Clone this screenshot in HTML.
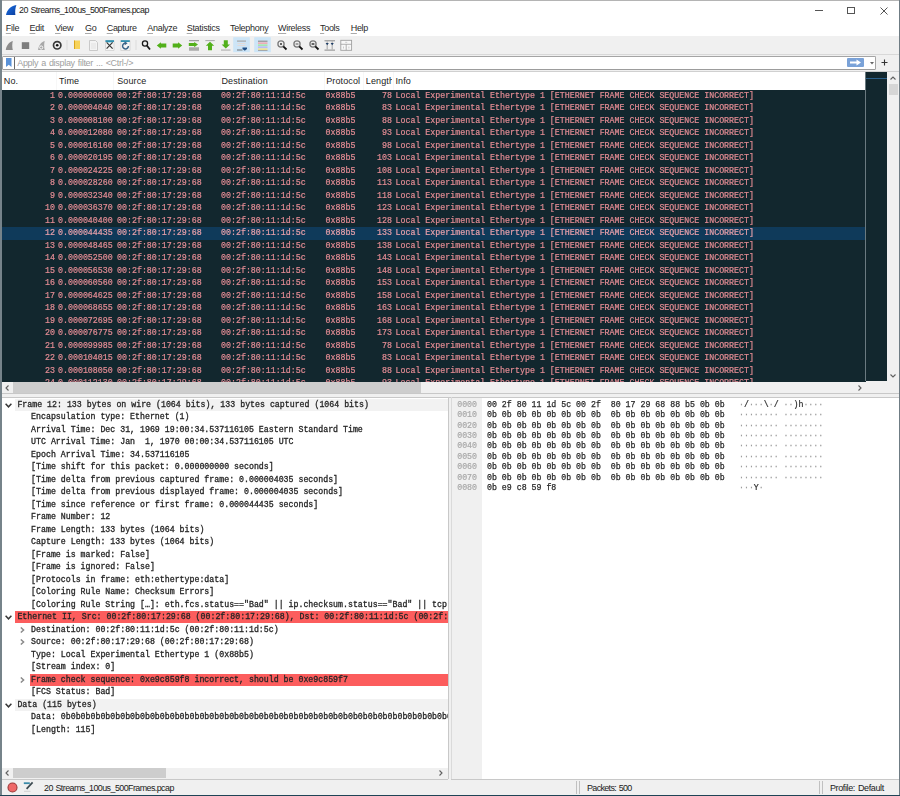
<!DOCTYPE html>
<html><head><meta charset="utf-8">
<style>
*{box-sizing:border-box;margin:0;padding:0}
html,body{width:900px;height:796px;overflow:hidden;background:#f0f0f0}
body{position:relative;font-family:"Liberation Sans",sans-serif;color:#000}
.a{position:absolute}
.ui{font-family:"Liberation Sans",sans-serif;font-size:9px;white-space:pre;letter-spacing:-0.3px;word-spacing:0.8px}
.mono{font-family:"Liberation Mono",monospace}
/* window frame */
#title{left:0;top:0;width:900px;height:19px;background:#fff}
#menubar{left:0;top:19px;width:900px;height:17px;background:#fff}
#toolbar{left:0;top:36px;width:900px;height:18px;background:#f0f0f0}
#fborder-top{left:0;top:0;width:900px;height:1.2px;background:#b4b4b4}
#fborder-l{left:0;top:0;width:1.5px;height:796px;background:#76838a}
#fborder-r{left:898.6px;top:0;width:1.4px;height:796px;background:#6f7c84}
#fborder-b{left:0;top:794.5px;width:900px;height:1.5px;background:#1f4456}
.menu{top:22.8px;color:#2a2a2a}
.menu u{text-decoration:underline;text-decoration-thickness:1px;text-underline-offset:1.5px;text-decoration-color:#aaa}
/* packet list */
#plist{left:2px;top:90px;width:864px;height:291.5px;background:#12272e;overflow:hidden}
.pr{position:absolute;left:-2px;width:866px;height:12.5px}
.pr.sel{background:#0f3a5a}
.c{position:absolute;top:0;font-family:"Liberation Mono",monospace;font-size:8.3px;line-height:12.5px;transform:translateZ(0);color:#e48c94;white-space:pre;-webkit-text-stroke:0.2px #e48c94}
.sel .c{color:#e8a0aa;-webkit-text-stroke:0.2px #e8a0aa}
.no{right:811px;text-align:right}
.tm{left:58px}
.src{left:117px}
.dst{left:221px}
.pro{left:325.5px}
.ln{right:474px;text-align:right}
.inf{left:395.5px}
#phead{left:2px;top:72px;width:864px;height:18px;background:#fff}
.hs{position:absolute;top:0;width:1px;height:18px;background:#f7f7f7}
.ht{position:absolute;top:4px;color:#222;letter-spacing:0.12px}
/* detail */
#dpane{left:2px;top:398px;width:446px;height:381px;background:#fff;overflow:hidden}
.dr{position:absolute;left:-2px;width:448px;height:12.5px}
.dt{position:absolute;top:0;transform:translateZ(0);font-family:"Liberation Mono",monospace;font-size:8.25px;line-height:12.5px;color:#262626;white-space:pre;-webkit-text-stroke:0.3px #262626}
.band{position:absolute;top:0.2px;right:0;height:11.8px}
.band.red{background:#fc5d5d}
.band.grey{background:#f2f2f2}
.chev{position:absolute;top:4px}
/* bytes */
#bpane{left:451px;top:397.5px;width:448px;height:381.5px;background:#fff;overflow:hidden}
.hr{position:absolute;left:-451px;width:900px;height:10.36px}
.off,.hx,.asc{position:absolute;top:0;transform:translateZ(0);font-family:"Liberation Mono",monospace;font-size:8.25px;line-height:10.36px;white-space:pre}
.off{left:457.2px;color:#a8a8a8;-webkit-text-stroke:0.2px #a8a8a8}
.hx{left:487px;color:#2a2a2a;-webkit-text-stroke:0.25px #2a2a2a}
.asc i{font-style:normal;color:#9a9a9a;-webkit-text-stroke:0.2px #9a9a9a}
.asc{left:739px;color:#2a2a2a;-webkit-text-stroke:0.2px #2a2a2a}
</style></head><body>
<div class="a" id="title"></div>
<div class="a" id="menubar"></div>
<div class="a" id="toolbar"></div>

<!-- title -->
<svg class="a" style="left:5px;top:4px" width="13" height="13" viewBox="0 0 13 13"><defs><linearGradient id="fg" x1="0" y1="0" x2="1" y2="1"><stop offset="0" stop-color="#1a72e8"/><stop offset="1" stop-color="#0b3c9c"/></linearGradient></defs><path d="M1 11.1 C1.8 6 5.5 1.8 11.4 0.9 C10.2 4 9.9 8 10.4 11.1 Z" fill="url(#fg)"/></svg>
<div class="a ui" style="left:19px;top:4.5px;font-size:8.9px;letter-spacing:-0.55px;color:#222">20 Streams_100us_500Frames.pcap</div>
<div class="a" style="left:815px;top:10px;width:8px;height:1px;background:#555"></div>
<div class="a" style="left:847px;top:6.5px;width:7.5px;height:7.5px;border:1px solid #555"></div>
<svg class="a" style="left:879.5px;top:6.5px" width="8" height="8" viewBox="0 0 8 8"><path d="M0.5 0.5 L7.5 7.5 M7.5 0.5 L0.5 7.5" stroke="#555" stroke-width="1"/></svg>

<!-- menu -->
<div class="a ui menu" style="left:5.8px"><u>F</u>ile</div>
<div class="a ui menu" style="left:29.6px"><u>E</u>dit</div>
<div class="a ui menu" style="left:55px"><u>V</u>iew</div>
<div class="a ui menu" style="left:85px"><u>G</u>o</div>
<div class="a ui menu" style="left:106.7px"><u>C</u>apture</div>
<div class="a ui menu" style="left:147.3px"><u>A</u>nalyze</div>
<div class="a ui menu" style="left:186.7px"><u>S</u>tatistics</div>
<div class="a ui menu" style="left:230px">Telephon<u>y</u></div>
<div class="a ui menu" style="left:278px"><u>W</u>ireless</div>
<div class="a ui menu" style="left:320px"><u>T</u>ools</div>
<div class="a ui menu" style="left:350.7px"><u>H</u>elp</div>


<!-- toolbar icons -->
<svg class="a" style="left:0;top:36px" width="360" height="18" viewBox="0 36 360 18">
 <!-- start capture fin (grey) -->
 <path d="M5.8 50 C6.5 45.5 9 42 12.8 41 C12.1 43.8 12.1 47 12.8 50 Z" fill="#8c8c8c"/>
 <!-- stop -->
 <rect x="21.8" y="42.2" width="7.4" height="6.8" fill="#7e7e7e"/>
 <!-- restart fin -->
 <path d="M38.1 50 C38.8 45.5 41 42 44.7 41 C44 43.8 44 47 44.7 50 Z" fill="#a8a8a8"/>
 <circle cx="41.2" cy="47.5" r="1.6" fill="none" stroke="#fff" stroke-width="0.9"/>
 <!-- capture options -->
 <circle cx="57.2" cy="45.3" r="3.7" fill="none" stroke="#3a3a3a" stroke-width="1.7"/>
 <circle cx="57.2" cy="45.3" r="1.3" fill="#111"/>
 <rect x="66.5" y="40" width="1" height="10" fill="#dcdcdc"/>
 <!-- open -->
 <rect x="74" y="40.5" width="6" height="8.5" fill="#f7d35a"/>
 <rect x="74" y="40.5" width="1" height="8.5" fill="#d9a520"/>
 <!-- save (disabled doc) -->
 <path d="M89.5 40.5 H95.5 L97.5 42.5 V50.5 H89.5 Z" fill="#f4f4f4" stroke="#c4c4c4" stroke-width="0.9"/>
 <path d="M91 44 H96 M91 46 H96 M91 48 H96" stroke="#dadada" stroke-width="0.7"/>
 <!-- close -->
 <path d="M105.5 40.5 H114 V50.5 H105.5 Z" fill="#f6f6f6" stroke="#d0d0d0" stroke-width="0.8"/>
 <rect x="105.5" y="40.2" width="8.5" height="1.8" fill="#2f8fb0"/>
 <rect x="107" y="42" width="5" height="0.8" fill="#9fe0f0"/>
 <path d="M106.6 42.4 L112.6 48.6 M112.6 42.4 L106.6 48.6" stroke="#383838" stroke-width="1.2"/>
 <!-- reload -->
 <path d="M120.8 40.5 H130 V50.5 H120.8 Z" fill="#f6f6f6" stroke="#d0d0d0" stroke-width="0.8"/>
 <rect x="120.8" y="40.2" width="9" height="1.8" fill="#2f8fb0"/>
 <path d="M126.2 43.2 A2.9 2.9 0 1 0 128.4 46" fill="none" stroke="#3a6488" stroke-width="1.5"/>
 <path d="M124.6 41.6 L127.6 43.3 L124.8 45.2 Z" fill="#3a6488"/>
 <rect x="135.5" y="40" width="1" height="10" fill="#dcdcdc"/>
 <!-- find -->
 <circle cx="145" cy="43.5" r="2.6" fill="none" stroke="#1a1a1a" stroke-width="1.3"/>
 <path d="M146.8 45.5 L150 49.5" stroke="#1a1a1a" stroke-width="1.8"/>
 <!-- back arrow -->
 <path d="M156.8 45.5 L160.9 42.2 V43.6 H166.3 V47.4 H160.9 V48.8 Z" fill="#52b01a"/>
 <!-- forward arrow -->
 <path d="M182.2 45.5 L178.1 42.2 V43.6 H172.7 V47.4 H178.1 V48.8 Z" fill="#52b01a"/>
 <!-- go to packet -->
 <rect x="189" y="40.2" width="10" height="1" fill="#8a8a8a"/>
 <rect x="189" y="47.4" width="10" height="1.4" fill="#9a9a9a"/>
 <rect x="189" y="49.2" width="10" height="1.4" fill="#9a9a9a"/>
 <path d="M198 44.6 L194.2 42 V43.1 H188.8 V46.1 H194.2 V47.2 Z" fill="#52b01a"/>
 <!-- first packet -->
 <rect x="205.3" y="40.2" width="9.5" height="0.9" fill="#a0a0a0"/>
 <path d="M210 41.8 L214.2 45.8 H212 V50.2 H208 V45.8 H205.8 Z" fill="#52b01a"/>
 <!-- last packet -->
 <path d="M225.8 48.6 L230 44.6 H227.8 V40.2 H223.8 V44.6 H221.6 Z" fill="#52b01a"/>
 <rect x="221" y="49.6" width="9.5" height="0.9" fill="#a0a0a0"/>
 <!-- autoscroll (toggled) -->
 <rect x="233.2" y="37.2" width="16.6" height="15" fill="#cde5f7"/>
 <rect x="237" y="40.5" width="9" height="1.2" fill="#a8a8a8"/>
 <rect x="237.5" y="43" width="8" height="0.8" fill="#e8d8d0"/>
 <rect x="237.5" y="45" width="8" height="0.8" fill="#e8d8d0"/>
 <rect x="237" y="49.6" width="5.5" height="0.8" fill="#555"/>
 <path d="M242.5 47.6 H247 V49 L244.8 50.7 L242.5 49 Z" fill="#1f4f86"/>
 <!-- colorize (toggled) -->
 <rect x="254.2" y="37.2" width="16.6" height="15" fill="#cde5f7"/>
 <rect x="258" y="40.6" width="9.5" height="1.3" fill="#9a9a9a"/>
 <rect x="258" y="42.4" width="9.5" height="1.5" fill="#f2a6b0"/>
 <rect x="258" y="44.4" width="9.5" height="1.5" fill="#a6e6a6"/>
 <rect x="258" y="46.4" width="9.5" height="1.5" fill="#b8b8f0"/>
 <rect x="258" y="48.4" width="9.5" height="1.5" fill="#f2e08a"/>
 <rect x="258" y="50" width="9.5" height="0.8" fill="#9a9a9a"/>
 <!-- zoom in/out/normal -->
 <g>
 <circle cx="281" cy="44" r="3.1" fill="#eee" stroke="#7a7a7a" stroke-width="1.3"/>
 <circle cx="281" cy="44" r="1" fill="#333"/>
 <path d="M283.3 46.4 L286.5 49.5" stroke="#111" stroke-width="1.8"/>
 <circle cx="297" cy="44" r="3.1" fill="#eee" stroke="#7a7a7a" stroke-width="1.3"/>
 <rect x="295.6" y="43.5" width="2.8" height="1" fill="#555"/>
 <path d="M299.3 46.4 L302.5 49.5" stroke="#111" stroke-width="1.8"/>
 <circle cx="313" cy="44" r="3.1" fill="#eee" stroke="#7a7a7a" stroke-width="1.3"/>
 <rect x="311.6" y="43.2" width="2.8" height="1.6" fill="#444"/>
 <path d="M315.3 46.4 L318.5 49.5" stroke="#111" stroke-width="1.8"/>
 </g>
 <!-- resize columns -->
 <rect x="324.5" y="40.3" width="10.5" height="1" fill="#8a8a8a"/>
 <rect x="324.5" y="49.6" width="10.5" height="1" fill="#8a8a8a"/>
 <rect x="326.6" y="41.3" width="1.2" height="8.3" fill="#b0b0b0"/>
 <rect x="331.6" y="41.3" width="1.2" height="8.3" fill="#b0b0b0"/>
 <path d="M325.6 43 H328.8 L327.2 45.2 Z" fill="#1e3e66"/>
 <path d="M330.6 43 H333.8 L332.2 45.2 Z" fill="#1e3e66"/>
 <!-- layout -->
 <rect x="340.8" y="40.3" width="10.8" height="10" fill="#f8f8f8" stroke="#a0a0a0" stroke-width="0.9"/>
 <path d="M340.8 44.3 H351.6 M346.2 44.3 V50.3" stroke="#a0a0a0" stroke-width="0.8"/>
 <path d="M345.2 42.3 H347.2 M343.5 46.5 V48.5 M348.9 46.5 V48.5" stroke="#b8b8b8" stroke-width="0.7"/>
</svg>
<div class="a" style="left:0;top:54px;width:900px;height:1px;background:#d8d8d8"></div>

<!-- filter bar -->
<div class="a" style="left:2.3px;top:55.5px;width:874px;height:14.5px;background:#fff;border:1px solid #a4a4a4;border-bottom:1.6px solid #9c9c9c;border-radius:1.5px"></div>
<div class="a" style="left:14px;top:56.5px;width:1px;height:12px;background:#6a6a6a"></div>
<svg class="a" style="left:5.5px;top:57.5px" width="6" height="9" viewBox="0 0 6 9"><path d="M0 0 H5.5 V9 L2.75 6.8 L0 9 Z" fill="#5a92d8"/></svg>
<div class="a ui" style="left:17.2px;top:58px;color:#a0a0a0">Apply a display filter ... &lt;Ctrl-/&gt;</div>
<div class="a" style="left:847px;top:58px;width:16.5px;height:9px;background:#7aa2d8;border-radius:1px"></div>
<svg class="a" style="left:849px;top:59px" width="13" height="7" viewBox="0 0 13 7"><path d="M1 2.5 H7.5 V0.5 L12 3.5 L7.5 6.5 V4.5 H1 Z" fill="#fff"/></svg>
<svg class="a" style="left:869.5px;top:61.5px" width="4" height="3" viewBox="0 0 4 3"><path d="M0 0 H4 L2 2.5 Z" fill="#666"/></svg>
<svg class="a" style="left:881px;top:59px" width="7" height="7" viewBox="0 0 7 7"><path d="M3.5 0.5 V6.5 M0.5 3.5 H6.5" stroke="#333" stroke-width="1.1"/></svg>

<!-- packet list header -->
<div class="a" style="left:0;top:71px;width:900px;height:1px;background:#d0d0d0"></div>
<div class="a" id="phead">
  <div class="hs" style="left:53.5px"></div>
  <div class="hs" style="left:111.3px"></div>
  <div class="hs" style="left:217.5px"></div>
  <div class="hs" style="left:322px"></div>
  <div class="hs" style="left:361.3px"></div>
  <div class="hs" style="left:391px"></div>
  <div class="ht ui" style="left:1.8px">No.</div>
  <div class="ht ui" style="left:57px">Time</div>
  <div class="ht ui" style="left:115.2px">Source</div>
  <div class="ht ui" style="left:219.5px">Destination</div>
  <div class="ht ui" style="left:324.2px">Protocol</div>
  <div class="ht ui" style="left:363.8px;width:26.2px;overflow:hidden">Length</div>
  <div class="ht ui" style="left:393.5px">Info</div>
</div>
<div class="a" id="plist">
<div class="pr" style="top:-0.30px"><span class="c no">1</span><span class="c tm">0.000000000</span><span class="c src">00:2f:80:17:29:68</span><span class="c dst">00:2f:80:11:1d:5c</span><span class="c pro">0x88b5</span><span class="c ln">78</span><span class="c inf">Local Experimental Ethertype 1 [ETHERNET FRAME CHECK SEQUENCE INCORRECT]</span></div>
<div class="pr" style="top:12.20px"><span class="c no">2</span><span class="c tm">0.000004040</span><span class="c src">00:2f:80:17:29:68</span><span class="c dst">00:2f:80:11:1d:5c</span><span class="c pro">0x88b5</span><span class="c ln">83</span><span class="c inf">Local Experimental Ethertype 1 [ETHERNET FRAME CHECK SEQUENCE INCORRECT]</span></div>
<div class="pr" style="top:24.70px"><span class="c no">3</span><span class="c tm">0.000008100</span><span class="c src">00:2f:80:17:29:68</span><span class="c dst">00:2f:80:11:1d:5c</span><span class="c pro">0x88b5</span><span class="c ln">88</span><span class="c inf">Local Experimental Ethertype 1 [ETHERNET FRAME CHECK SEQUENCE INCORRECT]</span></div>
<div class="pr" style="top:37.20px"><span class="c no">4</span><span class="c tm">0.000012080</span><span class="c src">00:2f:80:17:29:68</span><span class="c dst">00:2f:80:11:1d:5c</span><span class="c pro">0x88b5</span><span class="c ln">93</span><span class="c inf">Local Experimental Ethertype 1 [ETHERNET FRAME CHECK SEQUENCE INCORRECT]</span></div>
<div class="pr" style="top:49.70px"><span class="c no">5</span><span class="c tm">0.000016160</span><span class="c src">00:2f:80:17:29:68</span><span class="c dst">00:2f:80:11:1d:5c</span><span class="c pro">0x88b5</span><span class="c ln">98</span><span class="c inf">Local Experimental Ethertype 1 [ETHERNET FRAME CHECK SEQUENCE INCORRECT]</span></div>
<div class="pr" style="top:62.20px"><span class="c no">6</span><span class="c tm">0.000020195</span><span class="c src">00:2f:80:17:29:68</span><span class="c dst">00:2f:80:11:1d:5c</span><span class="c pro">0x88b5</span><span class="c ln">103</span><span class="c inf">Local Experimental Ethertype 1 [ETHERNET FRAME CHECK SEQUENCE INCORRECT]</span></div>
<div class="pr" style="top:74.70px"><span class="c no">7</span><span class="c tm">0.000024225</span><span class="c src">00:2f:80:17:29:68</span><span class="c dst">00:2f:80:11:1d:5c</span><span class="c pro">0x88b5</span><span class="c ln">108</span><span class="c inf">Local Experimental Ethertype 1 [ETHERNET FRAME CHECK SEQUENCE INCORRECT]</span></div>
<div class="pr" style="top:87.20px"><span class="c no">8</span><span class="c tm">0.000028260</span><span class="c src">00:2f:80:17:29:68</span><span class="c dst">00:2f:80:11:1d:5c</span><span class="c pro">0x88b5</span><span class="c ln">113</span><span class="c inf">Local Experimental Ethertype 1 [ETHERNET FRAME CHECK SEQUENCE INCORRECT]</span></div>
<div class="pr" style="top:99.70px"><span class="c no">9</span><span class="c tm">0.000032340</span><span class="c src">00:2f:80:17:29:68</span><span class="c dst">00:2f:80:11:1d:5c</span><span class="c pro">0x88b5</span><span class="c ln">118</span><span class="c inf">Local Experimental Ethertype 1 [ETHERNET FRAME CHECK SEQUENCE INCORRECT]</span></div>
<div class="pr" style="top:112.20px"><span class="c no">10</span><span class="c tm">0.000036370</span><span class="c src">00:2f:80:17:29:68</span><span class="c dst">00:2f:80:11:1d:5c</span><span class="c pro">0x88b5</span><span class="c ln">123</span><span class="c inf">Local Experimental Ethertype 1 [ETHERNET FRAME CHECK SEQUENCE INCORRECT]</span></div>
<div class="pr" style="top:124.70px"><span class="c no">11</span><span class="c tm">0.000040400</span><span class="c src">00:2f:80:17:29:68</span><span class="c dst">00:2f:80:11:1d:5c</span><span class="c pro">0x88b5</span><span class="c ln">128</span><span class="c inf">Local Experimental Ethertype 1 [ETHERNET FRAME CHECK SEQUENCE INCORRECT]</span></div>
<div class="pr sel" style="top:137.20px"><span class="c no">12</span><span class="c tm">0.000044435</span><span class="c src">00:2f:80:17:29:68</span><span class="c dst">00:2f:80:11:1d:5c</span><span class="c pro">0x88b5</span><span class="c ln">133</span><span class="c inf">Local Experimental Ethertype 1 [ETHERNET FRAME CHECK SEQUENCE INCORRECT]</span></div>
<div class="pr" style="top:149.70px"><span class="c no">13</span><span class="c tm">0.000048465</span><span class="c src">00:2f:80:17:29:68</span><span class="c dst">00:2f:80:11:1d:5c</span><span class="c pro">0x88b5</span><span class="c ln">138</span><span class="c inf">Local Experimental Ethertype 1 [ETHERNET FRAME CHECK SEQUENCE INCORRECT]</span></div>
<div class="pr" style="top:162.20px"><span class="c no">14</span><span class="c tm">0.000052500</span><span class="c src">00:2f:80:17:29:68</span><span class="c dst">00:2f:80:11:1d:5c</span><span class="c pro">0x88b5</span><span class="c ln">143</span><span class="c inf">Local Experimental Ethertype 1 [ETHERNET FRAME CHECK SEQUENCE INCORRECT]</span></div>
<div class="pr" style="top:174.70px"><span class="c no">15</span><span class="c tm">0.000056530</span><span class="c src">00:2f:80:17:29:68</span><span class="c dst">00:2f:80:11:1d:5c</span><span class="c pro">0x88b5</span><span class="c ln">148</span><span class="c inf">Local Experimental Ethertype 1 [ETHERNET FRAME CHECK SEQUENCE INCORRECT]</span></div>
<div class="pr" style="top:187.20px"><span class="c no">16</span><span class="c tm">0.000060560</span><span class="c src">00:2f:80:17:29:68</span><span class="c dst">00:2f:80:11:1d:5c</span><span class="c pro">0x88b5</span><span class="c ln">153</span><span class="c inf">Local Experimental Ethertype 1 [ETHERNET FRAME CHECK SEQUENCE INCORRECT]</span></div>
<div class="pr" style="top:199.70px"><span class="c no">17</span><span class="c tm">0.000064625</span><span class="c src">00:2f:80:17:29:68</span><span class="c dst">00:2f:80:11:1d:5c</span><span class="c pro">0x88b5</span><span class="c ln">158</span><span class="c inf">Local Experimental Ethertype 1 [ETHERNET FRAME CHECK SEQUENCE INCORRECT]</span></div>
<div class="pr" style="top:212.20px"><span class="c no">18</span><span class="c tm">0.000068655</span><span class="c src">00:2f:80:17:29:68</span><span class="c dst">00:2f:80:11:1d:5c</span><span class="c pro">0x88b5</span><span class="c ln">163</span><span class="c inf">Local Experimental Ethertype 1 [ETHERNET FRAME CHECK SEQUENCE INCORRECT]</span></div>
<div class="pr" style="top:224.70px"><span class="c no">19</span><span class="c tm">0.000072695</span><span class="c src">00:2f:80:17:29:68</span><span class="c dst">00:2f:80:11:1d:5c</span><span class="c pro">0x88b5</span><span class="c ln">168</span><span class="c inf">Local Experimental Ethertype 1 [ETHERNET FRAME CHECK SEQUENCE INCORRECT]</span></div>
<div class="pr" style="top:237.20px"><span class="c no">20</span><span class="c tm">0.000076775</span><span class="c src">00:2f:80:17:29:68</span><span class="c dst">00:2f:80:11:1d:5c</span><span class="c pro">0x88b5</span><span class="c ln">173</span><span class="c inf">Local Experimental Ethertype 1 [ETHERNET FRAME CHECK SEQUENCE INCORRECT]</span></div>
<div class="pr" style="top:249.70px"><span class="c no">21</span><span class="c tm">0.000099985</span><span class="c src">00:2f:80:17:29:68</span><span class="c dst">00:2f:80:11:1d:5c</span><span class="c pro">0x88b5</span><span class="c ln">78</span><span class="c inf">Local Experimental Ethertype 1 [ETHERNET FRAME CHECK SEQUENCE INCORRECT]</span></div>
<div class="pr" style="top:262.20px"><span class="c no">22</span><span class="c tm">0.000104015</span><span class="c src">00:2f:80:17:29:68</span><span class="c dst">00:2f:80:11:1d:5c</span><span class="c pro">0x88b5</span><span class="c ln">83</span><span class="c inf">Local Experimental Ethertype 1 [ETHERNET FRAME CHECK SEQUENCE INCORRECT]</span></div>
<div class="pr" style="top:274.70px"><span class="c no">23</span><span class="c tm">0.000108050</span><span class="c src">00:2f:80:17:29:68</span><span class="c dst">00:2f:80:11:1d:5c</span><span class="c pro">0x88b5</span><span class="c ln">88</span><span class="c inf">Local Experimental Ethertype 1 [ETHERNET FRAME CHECK SEQUENCE INCORRECT]</span></div>
<div class="pr" style="top:287.20px"><span class="c no">24</span><span class="c tm">0.000112130</span><span class="c src">00:2f:80:17:29:68</span><span class="c dst">00:2f:80:11:1d:5c</span><span class="c pro">0x88b5</span><span class="c ln">93</span><span class="c inf">Local Experimental Ethertype 1 [ETHERNET FRAME CHECK SEQUENCE INCORRECT]</span></div>
</div>
<!-- minimap -->
<div class="a" style="left:865px;top:72px;width:1px;height:309px;background:#6a7a80"></div>
<div class="a" style="left:866px;top:72px;width:21px;height:309px;background:#12272e"></div>
<div class="a" style="left:866px;top:78px;width:21px;height:1px;background:#2a5f8a"></div>
<!-- vertical scrollbar -->
<div class="a" style="left:887px;top:72px;width:11.5px;height:309px;background:#f0f0f0"></div>
<svg class="a" style="left:890px;top:76px" width="6" height="4" viewBox="0 0 6 4"><path d="M0.5 3.5 L3 1 L5.5 3.5" fill="none" stroke="#606060" stroke-width="1.1"/></svg>
<div class="a" style="left:888.5px;top:84.2px;width:9.5px;height:11px;background:#d6d6d6"></div>
<svg class="a" style="left:890px;top:374px" width="6" height="4" viewBox="0 0 6 4"><path d="M0.5 0.5 L3 3 L5.5 0.5" fill="none" stroke="#606060" stroke-width="1.1"/></svg>
<!-- horizontal scrollbar -->
<div class="a" style="left:2px;top:381.5px;width:885px;height:11.5px;background:#f0f0f0"></div>
<div class="a" style="left:13px;top:382px;width:408px;height:10.5px;background:#cdcdcd"></div>
<svg class="a" style="left:5px;top:384.5px" width="4" height="6" viewBox="0 0 4 6"><path d="M3.5 0.5 L1 3 L3.5 5.5" fill="none" stroke="#606060" stroke-width="1.1"/></svg>
<svg class="a" style="left:858px;top:384.5px" width="4" height="6" viewBox="0 0 4 6"><path d="M0.5 0.5 L3 3 L0.5 5.5" fill="none" stroke="#606060" stroke-width="1.1"/></svg>
<div class="a" style="left:0;top:393px;width:900px;height:1px;background:#c8c8c8"></div>
<div class="a" style="left:0;top:397px;width:900px;height:1px;background:#c8c8c8"></div>

<!-- detail pane -->
<div class="a" id="dpane">
<div class="dr" style="top:0.60px"><div class="band grey" style="left:15px"></div><svg class="chev" style="left:5px" width="7" height="5" viewBox="0 0 7 5"><path d="M0.6 0.8 L3.5 3.8 L6.4 0.8" fill="none" stroke="#383838" stroke-width="1.5"/></svg><span class="dt" style="left:17.4px">Frame 12: 133 bytes on wire (1064 bits), 133 bytes captured (1064 bits)</span></div>
<div class="dr" style="top:13.10px"><span class="dt" style="left:31.1px">Encapsulation type: Ethernet (1)</span></div>
<div class="dr" style="top:25.60px"><span class="dt" style="left:31.1px">Arrival Time: Dec 31, 1969 19:00:34.537116105 Eastern Standard Time</span></div>
<div class="dr" style="top:38.10px"><span class="dt" style="left:31.1px">UTC Arrival Time: Jan  1, 1970 00:00:34.537116105 UTC</span></div>
<div class="dr" style="top:50.60px"><span class="dt" style="left:31.1px">Epoch Arrival Time: 34.537116105</span></div>
<div class="dr" style="top:63.10px"><span class="dt" style="left:31.1px">[Time shift for this packet: 0.000000000 seconds]</span></div>
<div class="dr" style="top:75.60px"><span class="dt" style="left:31.1px">[Time delta from previous captured frame: 0.000004035 seconds]</span></div>
<div class="dr" style="top:88.10px"><span class="dt" style="left:31.1px">[Time delta from previous displayed frame: 0.000004035 seconds]</span></div>
<div class="dr" style="top:100.60px"><span class="dt" style="left:31.1px">[Time since reference or first frame: 0.000044435 seconds]</span></div>
<div class="dr" style="top:113.10px"><span class="dt" style="left:31.1px">Frame Number: 12</span></div>
<div class="dr" style="top:125.60px"><span class="dt" style="left:31.1px">Frame Length: 133 bytes (1064 bits)</span></div>
<div class="dr" style="top:138.10px"><span class="dt" style="left:31.1px">Capture Length: 133 bytes (1064 bits)</span></div>
<div class="dr" style="top:150.60px"><span class="dt" style="left:31.1px">[Frame is marked: False]</span></div>
<div class="dr" style="top:163.10px"><span class="dt" style="left:31.1px">[Frame is ignored: False]</span></div>
<div class="dr" style="top:175.60px"><span class="dt" style="left:31.1px">[Protocols in frame: eth:ethertype:data]</span></div>
<div class="dr" style="top:188.10px"><span class="dt" style="left:31.1px">[Coloring Rule Name: Checksum Errors]</span></div>
<div class="dr" style="top:200.60px"><span class="dt" style="left:31.1px">[Coloring Rule String […]: eth.fcs.status==&quot;Bad&quot; || ip.checksum.status==&quot;Bad&quot; || tcp.checksum.status==&quot;Bad&quot; || udp.checksum.status==&quot;Bad&quot;</span></div>
<div class="dr" style="top:213.10px"><div class="band red" style="left:15px"></div><svg class="chev" style="left:5px" width="7" height="5" viewBox="0 0 7 5"><path d="M0.6 0.8 L3.5 3.8 L6.4 0.8" fill="none" stroke="#383838" stroke-width="1.5"/></svg><span class="dt" style="left:17.4px">Ethernet II, Src: 00:2f:80:17:29:68 (00:2f:80:17:29:68), Dst: 00:2f:80:11:1d:5c (00:2f:80:11:1d:5c)</span></div>
<div class="dr" style="top:225.60px"><svg class="chev" style="left:19.8px;top:3.3px" width="5" height="6" viewBox="0 0 5 6"><path d="M0.8 0.5 L3.6 3 L0.8 5.5" fill="none" stroke="#8a8a8a" stroke-width="1.45"/></svg><span class="dt" style="left:31.1px">Destination: 00:2f:80:11:1d:5c (00:2f:80:11:1d:5c)</span></div>
<div class="dr" style="top:238.10px"><svg class="chev" style="left:19.8px;top:3.3px" width="5" height="6" viewBox="0 0 5 6"><path d="M0.8 0.5 L3.6 3 L0.8 5.5" fill="none" stroke="#8a8a8a" stroke-width="1.45"/></svg><span class="dt" style="left:31.1px">Source: 00:2f:80:17:29:68 (00:2f:80:17:29:68)</span></div>
<div class="dr" style="top:250.60px"><span class="dt" style="left:31.1px">Type: Local Experimental Ethertype 1 (0x88b5)</span></div>
<div class="dr" style="top:263.10px"><span class="dt" style="left:31.1px">[Stream index: 0]</span></div>
<div class="dr" style="top:275.60px"><div class="band red" style="left:29.5px"></div><svg class="chev" style="left:19.8px;top:3.3px" width="5" height="6" viewBox="0 0 5 6"><path d="M0.8 0.5 L3.6 3 L0.8 5.5" fill="none" stroke="#8a8a8a" stroke-width="1.45"/></svg><span class="dt" style="left:31.1px">Frame check sequence: 0xe9c859f8 incorrect, should be 0xe9c859f7</span></div>
<div class="dr" style="top:288.10px"><span class="dt" style="left:31.1px">[FCS Status: Bad]</span></div>
<div class="dr" style="top:300.60px"><div class="band grey" style="left:15px"></div><svg class="chev" style="left:5px" width="7" height="5" viewBox="0 0 7 5"><path d="M0.6 0.8 L3.5 3.8 L6.4 0.8" fill="none" stroke="#383838" stroke-width="1.5"/></svg><span class="dt" style="left:17.4px">Data (115 bytes)</span></div>
<div class="dr" style="top:313.10px"><span class="dt" style="left:31.1px">Data: 0b0b0b0b0b0b0b0b0b0b0b0b0b0b0b0b0b0b0b0b0b0b0b0b0b0b0b0b0b0b0b0b0b0b0b0b0b0b0b0b0b0b0b0b0b0b0b0b0b0b0b0b0b0b0b0b0b0b0b0b0b0b0b0b0b0b0b0b0b0b0b0b0b0b0b0b0b0b0b0b0b0b0b0b0b0b0b0b0b0b0b0b0b0b0b0b0b0b0b0b0b0b0b0b0b0b0b0b0b0b0b0b0b0b0b</span></div>
<div class="dr" style="top:325.60px"><span class="dt" style="left:31.1px">[Length: 115]</span></div>
</div>
<div class="a" style="left:447.5px;top:397px;width:1px;height:382px;background:#c8c8c8"></div>
<div class="a" style="left:2px;top:767.5px;width:445.5px;height:11px;background:#f0f0f0"></div>
<div class="a" style="left:13px;top:768px;width:153px;height:10px;background:#cdcdcd"></div>
<svg class="a" style="left:5px;top:770px" width="4" height="6" viewBox="0 0 4 6"><path d="M3.5 0.5 L1 3 L3.5 5.5" fill="none" stroke="#606060" stroke-width="1.1"/></svg>
<svg class="a" style="left:439px;top:770px" width="4" height="6" viewBox="0 0 4 6"><path d="M0.5 0.5 L3 3 L0.5 5.5" fill="none" stroke="#606060" stroke-width="1.1"/></svg>

<!-- bytes pane -->
<div class="a" id="bpane">
  <div class="a" style="left:0;top:0;width:30.5px;height:382px;background:#f0f0f0"></div>
<div class="hr" style="top:2.50px"><span class="off">0000</span><span class="hx">00 2f 80 11 1d 5c 00 2f  80 17 29 68 88 b5 0b 0b</span><span class="asc"><i>·</i>/<i>·</i><i>·</i><i>·</i>\<i>·</i>/ <i>·</i><i>·</i>)h<i>·</i><i>·</i><i>·</i><i>·</i></span></div>
<div class="hr" style="top:12.86px"><span class="off">0010</span><span class="hx">0b 0b 0b 0b 0b 0b 0b 0b  0b 0b 0b 0b 0b 0b 0b 0b</span><span class="asc"><i>·</i><i>·</i><i>·</i><i>·</i><i>·</i><i>·</i><i>·</i><i>·</i> <i>·</i><i>·</i><i>·</i><i>·</i><i>·</i><i>·</i><i>·</i><i>·</i></span></div>
<div class="hr" style="top:23.22px"><span class="off">0020</span><span class="hx">0b 0b 0b 0b 0b 0b 0b 0b  0b 0b 0b 0b 0b 0b 0b 0b</span><span class="asc"><i>·</i><i>·</i><i>·</i><i>·</i><i>·</i><i>·</i><i>·</i><i>·</i> <i>·</i><i>·</i><i>·</i><i>·</i><i>·</i><i>·</i><i>·</i><i>·</i></span></div>
<div class="hr" style="top:33.58px"><span class="off">0030</span><span class="hx">0b 0b 0b 0b 0b 0b 0b 0b  0b 0b 0b 0b 0b 0b 0b 0b</span><span class="asc"><i>·</i><i>·</i><i>·</i><i>·</i><i>·</i><i>·</i><i>·</i><i>·</i> <i>·</i><i>·</i><i>·</i><i>·</i><i>·</i><i>·</i><i>·</i><i>·</i></span></div>
<div class="hr" style="top:43.94px"><span class="off">0040</span><span class="hx">0b 0b 0b 0b 0b 0b 0b 0b  0b 0b 0b 0b 0b 0b 0b 0b</span><span class="asc"><i>·</i><i>·</i><i>·</i><i>·</i><i>·</i><i>·</i><i>·</i><i>·</i> <i>·</i><i>·</i><i>·</i><i>·</i><i>·</i><i>·</i><i>·</i><i>·</i></span></div>
<div class="hr" style="top:54.30px"><span class="off">0050</span><span class="hx">0b 0b 0b 0b 0b 0b 0b 0b  0b 0b 0b 0b 0b 0b 0b 0b</span><span class="asc"><i>·</i><i>·</i><i>·</i><i>·</i><i>·</i><i>·</i><i>·</i><i>·</i> <i>·</i><i>·</i><i>·</i><i>·</i><i>·</i><i>·</i><i>·</i><i>·</i></span></div>
<div class="hr" style="top:64.66px"><span class="off">0060</span><span class="hx">0b 0b 0b 0b 0b 0b 0b 0b  0b 0b 0b 0b 0b 0b 0b 0b</span><span class="asc"><i>·</i><i>·</i><i>·</i><i>·</i><i>·</i><i>·</i><i>·</i><i>·</i> <i>·</i><i>·</i><i>·</i><i>·</i><i>·</i><i>·</i><i>·</i><i>·</i></span></div>
<div class="hr" style="top:75.02px"><span class="off">0070</span><span class="hx">0b 0b 0b 0b 0b 0b 0b 0b  0b 0b 0b 0b 0b 0b 0b 0b</span><span class="asc"><i>·</i><i>·</i><i>·</i><i>·</i><i>·</i><i>·</i><i>·</i><i>·</i> <i>·</i><i>·</i><i>·</i><i>·</i><i>·</i><i>·</i><i>·</i><i>·</i></span></div>
<div class="hr" style="top:85.38px"><span class="off">0080</span><span class="hx">0b e9 c8 59 f8</span><span class="asc"><i>·</i><i>·</i><i>·</i>Y<i>·</i></span></div>
</div>
<div class="a" style="left:450.5px;top:397px;width:1px;height:382px;background:#dadada"></div>
<div class="a" style="left:450.5px;top:778.5px;width:449px;height:1px;background:#c8c8c8"></div>
<div class="a" style="left:2px;top:778.5px;width:446px;height:1px;background:#c8c8c8"></div>

<!-- status bar -->
<div class="a" style="left:0;top:779.5px;width:900px;height:15px;background:#f0f0f0"></div>
<svg class="a" style="left:7px;top:782px" width="11" height="11" viewBox="0 0 11 11"><circle cx="5.5" cy="5.5" r="4.5" fill="#ef6868" stroke="#9a3838" stroke-width="1.1"/></svg>
<svg class="a" style="left:22px;top:781px" width="12" height="12" viewBox="0 0 12 12"><path d="M1.8 2.2 H7.8" stroke="#3a8aa8" stroke-width="1.8"/><path d="M10.6 1.4 L4.6 7.8" stroke="#3c4a50" stroke-width="1.7"/><path d="M2 10.3 H8.5" stroke="#c8c8c8" stroke-width="0.8"/></svg>
<div class="a ui" style="left:44px;top:782.5px;font-size:8.9px;letter-spacing:-0.55px;color:#222">20 Streams_100us_500Frames.pcap</div>
<div class="a" style="left:575.5px;top:781px;width:1px;height:13px;background:#c0c0c0"></div>
<div class="a" style="left:578.5px;top:781px;width:1px;height:13px;background:#c0c0c0"></div>
<div class="a ui" style="left:587px;top:782.5px;letter-spacing:-0.68px;color:#222">Packets: 500</div>
<div class="a" style="left:819px;top:781px;width:1px;height:13px;background:#c0c0c0"></div>
<div class="a" style="left:821.5px;top:781px;width:1px;height:13px;background:#c0c0c0"></div>
<div class="a ui" style="left:830px;top:782.5px;letter-spacing:-0.38px;color:#222">Profile: Default</div>

<div class="a" id="fborder-top"></div>
<div class="a" id="fborder-l"></div>
<div class="a" id="fborder-r"></div>
<div class="a" id="fborder-b"></div>
</body></html>
